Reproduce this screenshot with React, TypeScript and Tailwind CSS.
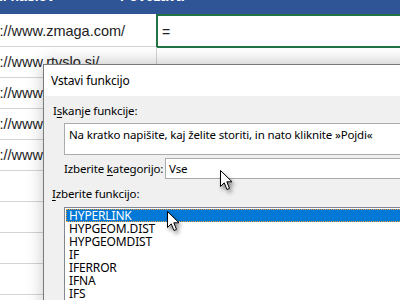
import React from "react";

function Cursor({ className }: { className: string }) {
  return (
    <svg
      className={className}
      width="16"
      height="24"
      viewBox="0 0 16 24"
      style={{ filter: "drop-shadow(2px 3px 2px rgba(0,0,0,0.45))" }}
    >
      <path
        d="M1.5 1.5 L1.5 17.5 L5.2 13.8 L8 20.5 L10.5 19.4 L7.8 12.8 L13 12.8 Z"
        fill="#ffffff"
        stroke="#000000"
        strokeWidth="1"
        strokeLinejoin="miter"
      />
    </svg>
  );
}

const rows = [
  "https://www.zmaga.com/",
  "https://www.rtvslo.si/",
  "https://www.google.com/",
  "https://www.youtube.com/",
  "https://www.siol.net/",
  "",
  "",
  "",
  "",
];

export default function App() {
  return (
    <div
      className="relative w-[400px] h-[300px] overflow-hidden bg-white"
      style={{ fontFamily: "'Liberation Sans', Arial, sans-serif" }}
    >
      {/* sheet */}
      <div className="flex flex-col">
        <div className="flex h-[14px] bg-[#2f5597] overflow-hidden text-white font-bold text-[14px] leading-[16px]">
          <div className="w-[157px] shrink-0 -mt-[12px] -ml-[40px] whitespace-nowrap">Spletni naslov</div>
          <div className="flex-1 -mt-[12px] pl-[3px] whitespace-nowrap">Povezava</div>
        </div>
        <div className="flex h-[33px]">
          <div className="w-[156px] shrink-0 border-b border-[#d4d4d4] flex items-end pb-[7px] text-[14.5px] leading-[16px] text-[#222] whitespace-nowrap overflow-hidden">
            <span className="-ml-[32px]">{rows[0]}</span>
          </div>
          <div className="w-[260px] shrink-0 h-[34px] border-2 border-[#217346] flex items-end pb-[6px] pl-[4px] text-[14px] leading-[16px] text-[#222]">
            =
          </div>
        </div>
        {rows.slice(1).map((r, i) => (
          <div key={i} className="flex h-[31px]">
            <div className="w-[157px] shrink-0 border-b border-r border-[#d4d4d4] flex items-end pb-[7px] text-[14.5px] leading-[16px] text-[#222] whitespace-nowrap overflow-hidden">
              <span className="-ml-[32px]">{r}</span>
            </div>
            <div className="flex-1 border-b border-[#d4d4d4]" />
          </div>
        ))}
      </div>

      {/* dialog */}
      <div
        className="absolute left-[43px] top-[64px] w-[390px] h-[260px] border border-[#7a7a7a] bg-[#f0f0f0] shadow-[0_-2px_16px_rgba(0,0,0,0.22)] text-[11.5px] tracking-[-0.15px] text-black"
        style={{ fontFamily: "'Noto Sans', 'Open Sans', sans-serif" }}
      >
        <div className="h-[31px] bg-white flex items-center pl-[7px] leading-[16px] text-[12px]">Vstavi funkcijo</div>
        <div className="flex flex-col pl-[9px] pt-[7px]">
          <div className="leading-[16px] whitespace-nowrap">
            I<span className="underline underline-offset-2">s</span>kanje funkcije:
          </div>
          <div className="ml-[11px] mt-[4px] h-[32px] bg-white border border-[#ababab] px-[4px] pt-[3px] leading-[16px] whitespace-nowrap">
            Na kratko napišite, kaj želite storiti, in nato kliknite »Pojdi«
          </div>
          <div className="ml-[11px] mt-[3px] flex items-center h-[21px]">
            <div className="w-[101px] shrink-0 leading-[16px] whitespace-nowrap">
              Izberite <span className="underline underline-offset-2">k</span>ategorijo:
            </div>
            <div className="flex-1 h-[21px] bg-white border border-[#ababab] pl-[3px] leading-[19px]">Vse</div>
          </div>
          <div className="mt-[7px] -ml-[1px] leading-[16px] whitespace-nowrap">
            <span className="underline underline-offset-2">I</span>zberite funkcijo:
          </div>
          <div className="ml-[11px] mt-[5px] bg-white border border-[#828790] p-px h-[120px] leading-[13px] text-[12px]">
            <div className="h-[13px] bg-[#0078d7] text-white pl-[3px] outline outline-1 outline-dotted outline-[#f0a030] -outline-offset-1">
              HYPERLINK
            </div>
            {["HYPGEOM.DIST", "HYPGEOMDIST", "IF", "IFERROR", "IFNA", "IFS", "IMABS"].map((f) => (
              <div key={f} className="h-[13px] pl-[3px]">
                {f}
              </div>
            ))}
          </div>
        </div>
      </div>

      <Cursor className="absolute left-[219px] top-[169px]" />
      <Cursor className="absolute left-[166px] top-[210px]" />
    </div>
  );
}
